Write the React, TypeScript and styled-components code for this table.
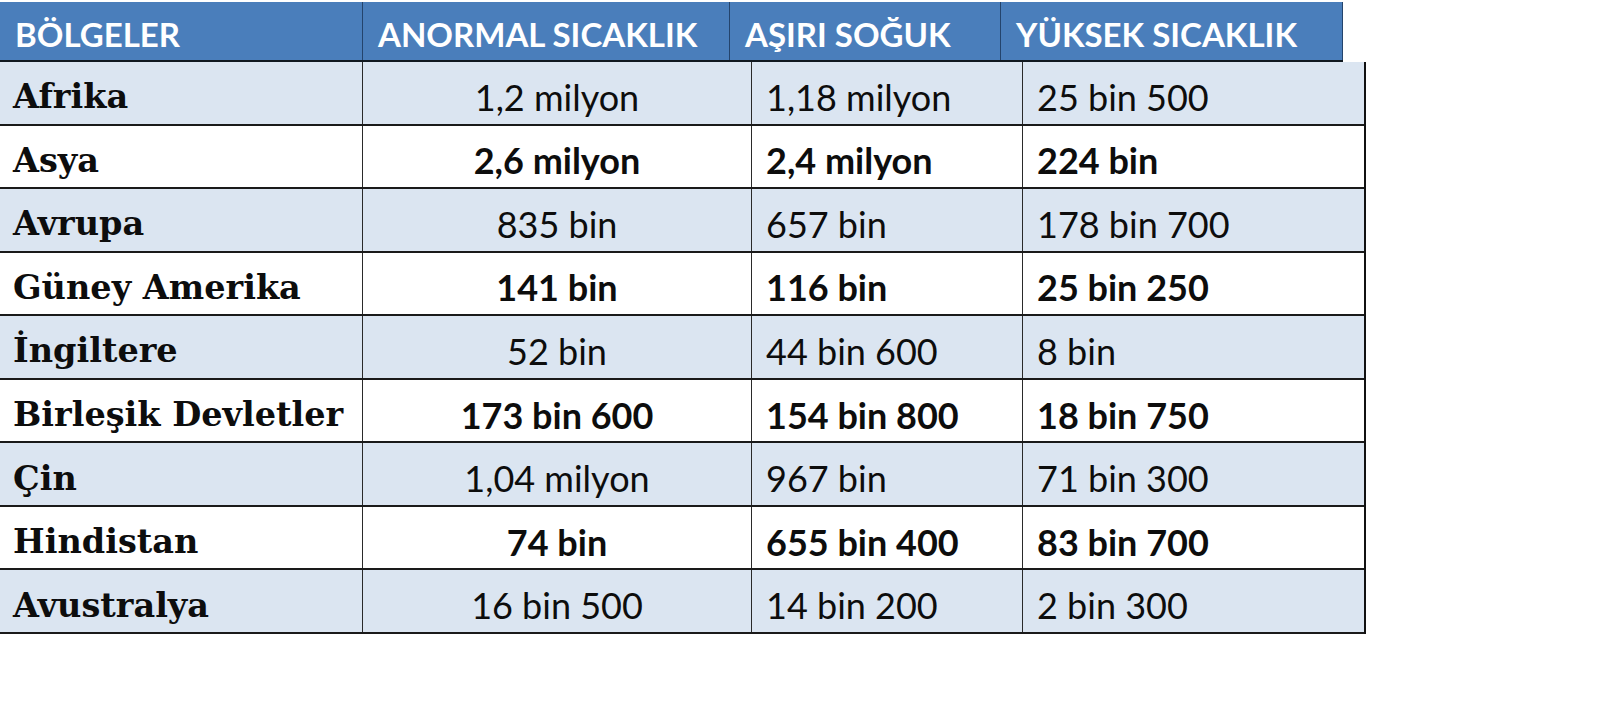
import React from 'react';
import styled, { createGlobalStyle } from 'styled-components';

const GlobalStyle = createGlobalStyle`
  html, body {
    margin: 0;
    padding: 0;
    background: #ffffff;
  }
`;

const headers = ['BÖLGELER', 'ANORMAL SICAKLIK', 'AŞIRI SOĞUK', 'YÜKSEK SICAKLIK'];

const rows = [
  ['Afrika', '1,2 milyon', '1,18 milyon', '25 bin 500'],
  ['Asya', '2,6 milyon', '2,4 milyon', '224 bin'],
  ['Avrupa', '835 bin', '657 bin', '178 bin 700'],
  ['Güney Amerika', '141 bin', '116 bin', '25 bin 250'],
  ['İngiltere', '52 bin', '44 bin 600', '8 bin'],
  ['Birleşik Devletler', '173 bin 600', '154 bin 800', '18 bin 750'],
  ['Çin', '1,04 milyon', '967 bin', '71 bin 300'],
  ['Hindistan', '74 bin', '655 bin 400', '83 bin 700'],
  ['Avustralya', '16 bin 500', '14 bin 200', '2 bin 300'],
];

export default function App() {
  return (
    <>
      <GlobalStyle />
      <Page>
        <HeaderRow>
          {headers.map((h) => (
            <HeaderCell key={h}>{h}</HeaderCell>
          ))}
        </HeaderRow>
        <Body>
          {rows.map((row, i) => (
            <Row key={row[0]} $shaded={i % 2 === 0}>
              <RegionCell>{row[0]}</RegionCell>
              <ValueCell $center $bold={i % 2 === 1}>{row[1]}</ValueCell>
              <ValueCell $bold={i % 2 === 1}>{row[2]}</ValueCell>
              <ValueCell $bold={i % 2 === 1} $last>{row[3]}</ValueCell>
            </Row>
          ))}
        </Body>
      </Page>
    </>
  );
}

const Page = styled.div`
  padding-top: 2px;
  width: 1600px;
  height: 725px;
  box-sizing: border-box;
`;

const HeaderRow = styled.div`
  display: grid;
  grid-template-columns: 363px 367px 271px 342px;
  width: 1343px;
  height: 60px;
  box-sizing: border-box;
  background: #4a7ebb;
  border-bottom: 2px solid #101820;
`;

const HeaderCell = styled.div`
  display: flex;
  align-items: center;
  padding: 6px 0 0 15px;
  box-sizing: border-box;
  border-right: 1px solid #24446c;
  color: #ffffff;
  font-family: Lato, 'Open Sans', sans-serif;
  font-weight: 700;
  font-size: 33px;
  white-space: nowrap;
`;

const Body = styled.div`
  width: 1366px;
  box-sizing: border-box;
  border-right: 2px solid #111111;
`;

const Row = styled.div<{ $shaded: boolean }>`
  display: grid;
  grid-template-columns: 363px 389px 271px 341px;
  height: 63.55px;
  box-sizing: border-box;
  border-bottom: 2px solid #1a1a1a;
  background: ${(p) => (p.$shaded ? '#dbe5f1' : '#ffffff')};
`;

const RegionCell = styled.div`
  display: flex;
  align-items: center;
  padding: 8px 0 0 13px;
  box-sizing: border-box;
  border-right: 1px solid #2a2a2a;
  color: #0d0d0d;
  font-family: 'DejaVu Serif', 'Liberation Serif', serif;
  font-weight: 700;
  font-size: 33.5px;
  white-space: nowrap;
`;

const ValueCell = styled.div<{ $center?: boolean; $bold?: boolean; $last?: boolean }>`
  display: flex;
  align-items: center;
  justify-content: ${(p) => (p.$center ? 'center' : 'flex-start')};
  padding: 8px 0 0 ${(p) => (p.$center ? '0' : '14px')};
  box-sizing: border-box;
  border-right: ${(p) => (p.$last ? 'none' : '1px solid #2a2a2a')};
  color: #0d0d0d;
  font-family: Lato, 'Open Sans', sans-serif;
  font-weight: ${(p) => (p.$bold ? 700 : 400)};
  font-size: 36px;
  white-space: nowrap;
`;
